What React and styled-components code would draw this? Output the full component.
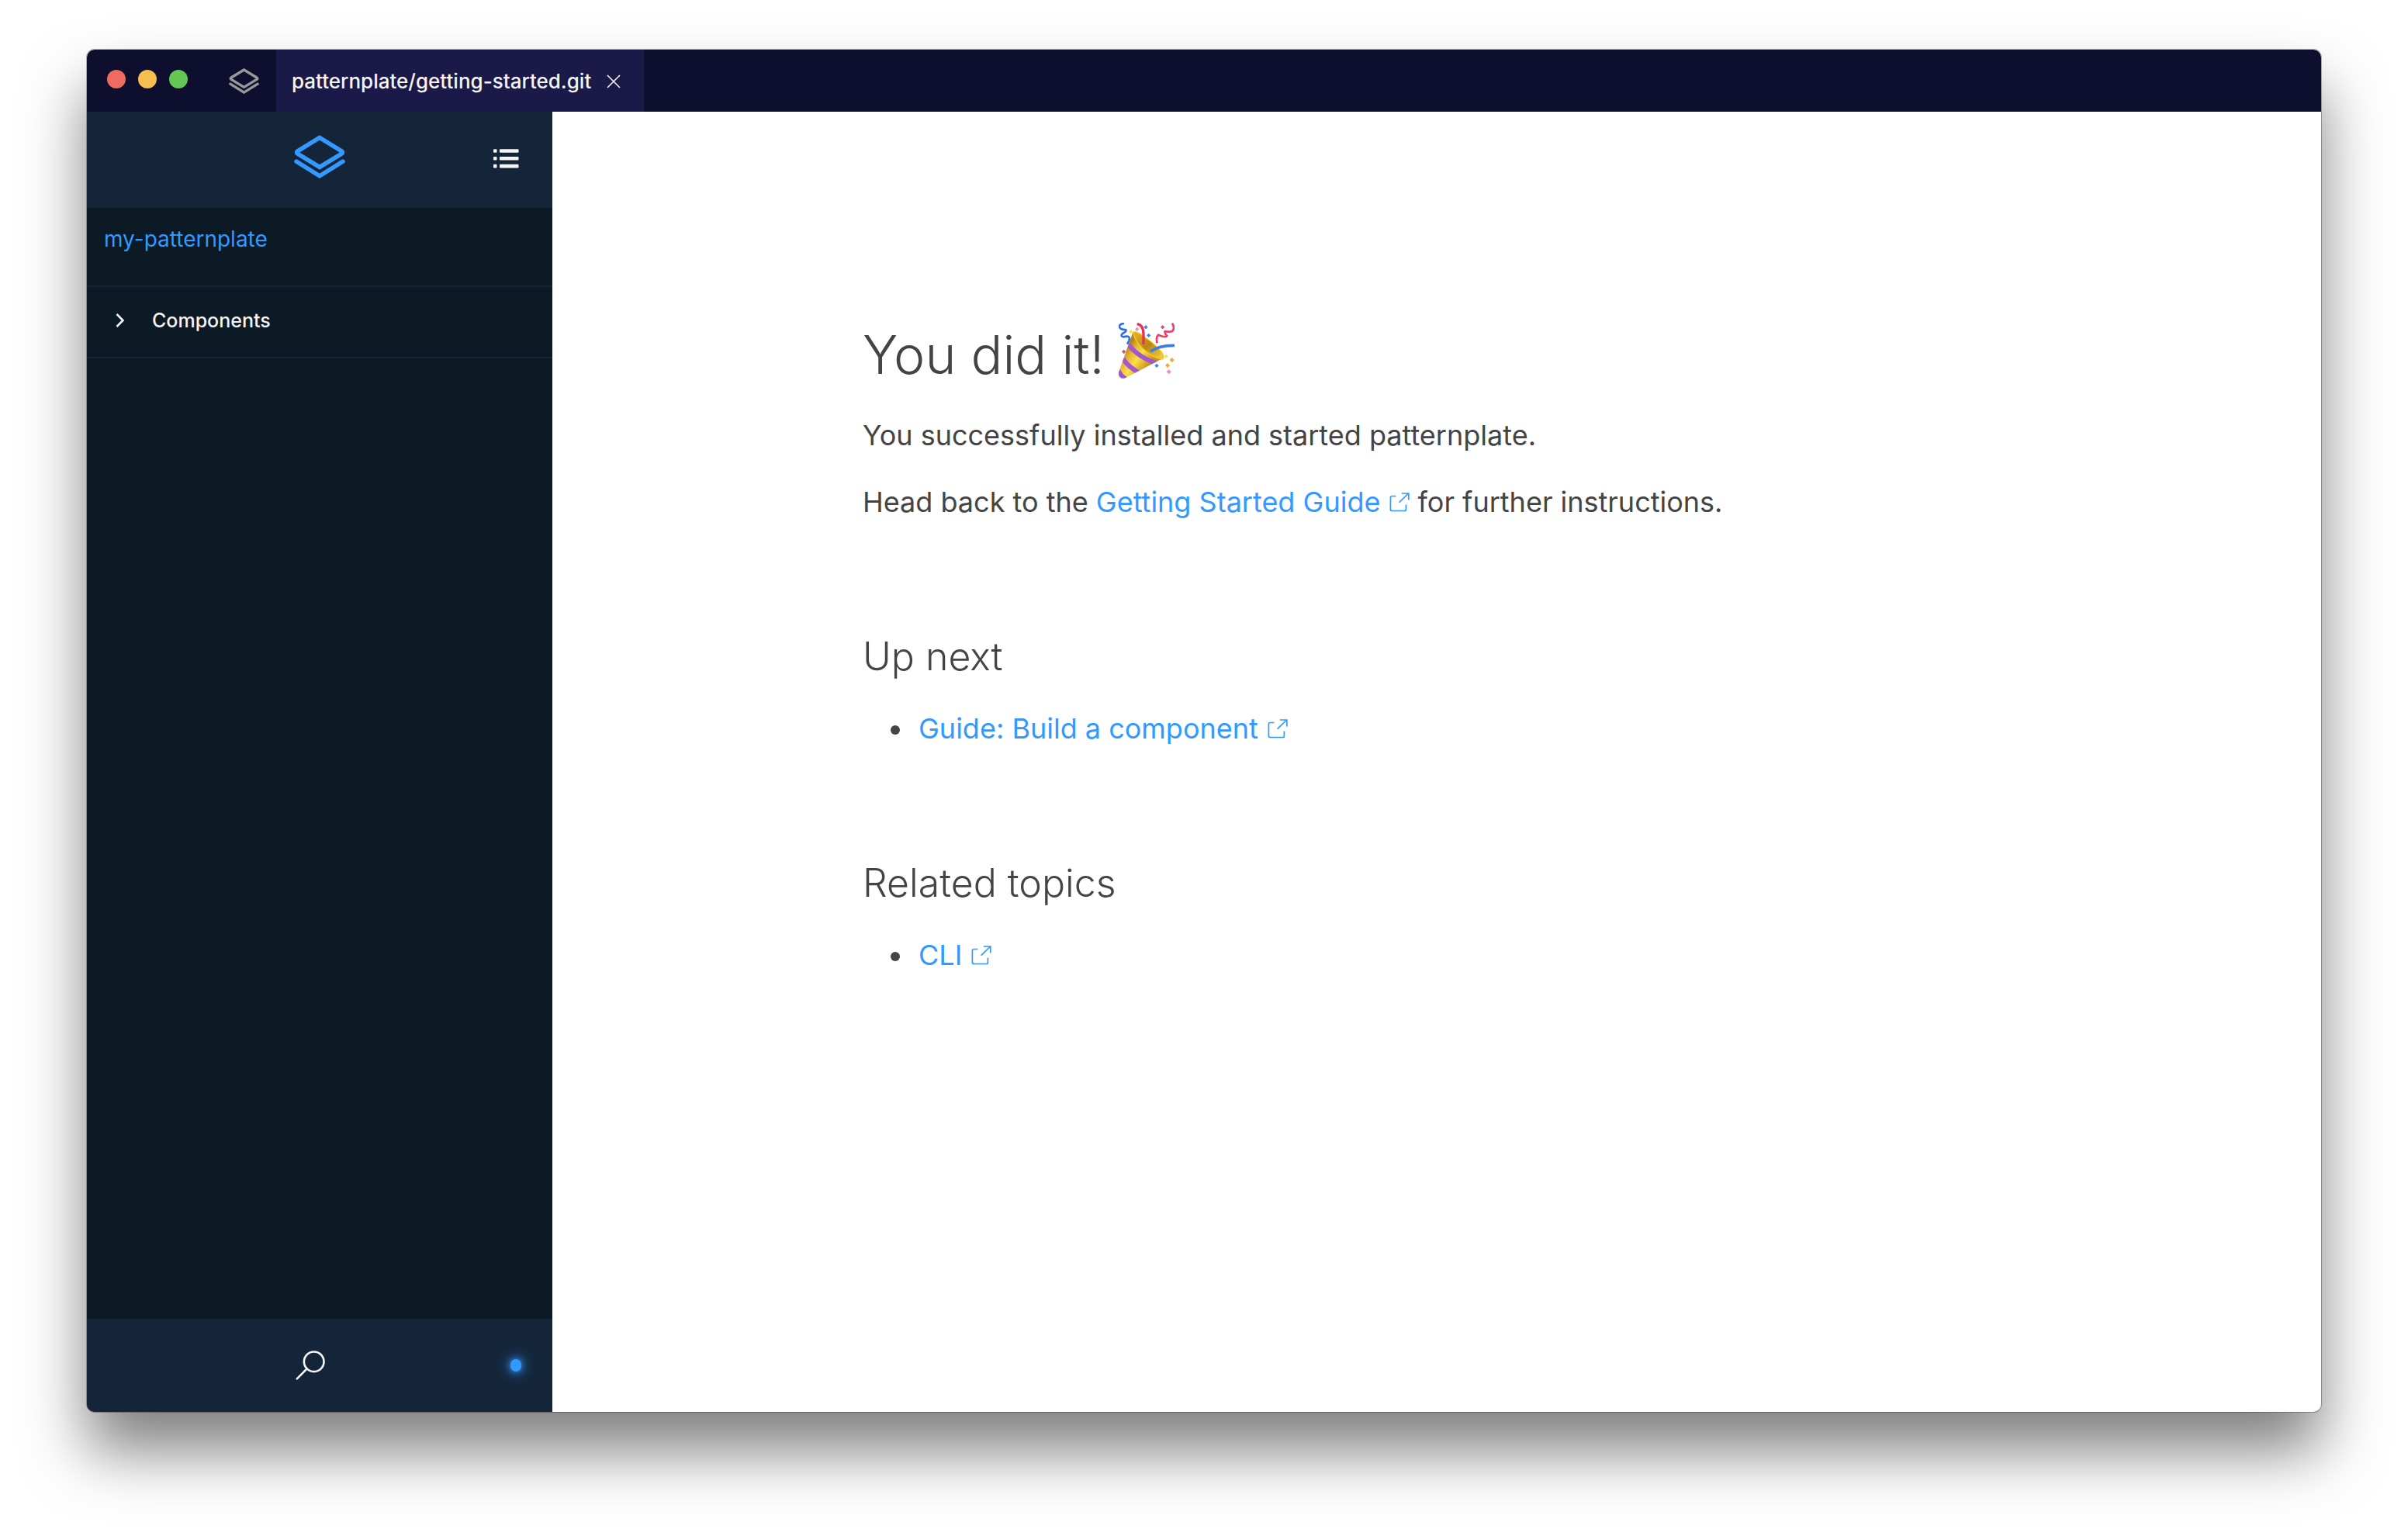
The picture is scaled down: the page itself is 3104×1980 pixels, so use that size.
import React from "react";
import styled, { createGlobalStyle } from "styled-components";

const color = {
  blue: "#3399ff",
  text: "#444444",
  light: "#f5f5f5",
  titleBar: "#0e0e2f",
  tab: "#1b1947",
  panel: "#142539",
  sidebar: "#0c1a26",
};

const GlobalStyle = createGlobalStyle`
  *, *::before, *::after { box-sizing: border-box; }
  body {
    margin: 0;
    background: #ffffff;
    color: ${color.text};
    font-family: Inter, "Liberation Sans", sans-serif;
  }
  svg { display: block; flex: none; }
`;

const Desktop = styled.div`
  display: flex;
  min-height: 100vh;
  padding: 64px 112px 160px;
`;

const Window = styled.div`
  flex: 1;
  display: flex;
  flex-direction: column;
  overflow: hidden;
  border-radius: 10px;
  background: #ffffff;
  box-shadow: 0 0 0 1px rgba(0, 0, 0, 0.28), 0 50px 80px rgba(0, 0, 0, 0.5);
`;

const TitleBar = styled.header`
  display: flex;
  align-items: stretch;
  height: 80px;
  background: ${color.titleBar};
`;

const TrafficLights = styled.div`
  display: flex;
  align-items: center;
  gap: 16px;
  padding: 0 53px 4px 26px;
`;

const Light = styled.button`
  width: 24px;
  height: 24px;
  padding: 0;
  border: 0;
  border-radius: 50%;
  background: ${(p) => p.$fill};
`;

const IconButton = styled.button`
  display: flex;
  align-items: center;
  justify-content: center;
  padding: 0;
  border: 0;
  background: none;
  color: ${(p) => p.$color || color.light};
`;

const HomeButton = styled(IconButton)`
  margin-right: 22px;
`;

const Tab = styled.div`
  display: flex;
  align-items: center;
  gap: 20px;
  padding: 2px 30px 0 20px;
  background: ${color.tab};
  color: ${color.light};
  font-size: 26px;
  font-weight: 500;
  line-height: 40px;
`;

const Body = styled.div`
  flex: 1;
  display: flex;
`;

const Sidebar = styled.aside`
  display: flex;
  flex-direction: column;
  flex: none;
  width: 600px;
  background: ${color.sidebar};
`;

const SidebarHeader = styled.div`
  display: grid;
  grid-template-columns: 1fr auto 1fr;
  align-items: center;
  height: 124px;
  padding: 0 43px 4px;
  background: ${color.panel};

  > :last-child { justify-self: end; }
`;

const LogoLink = styled.a`
  grid-column: 2;
  padding-bottom: 4px;
  color: ${color.blue};
`;

const ProjectLink = styled.a`
  display: block;
  padding: 20px 22px 40px;
  border-bottom: 2px solid ${color.panel};
  color: ${color.blue};
  font-size: 28px;
  line-height: 40px;
  text-decoration: none;
`;

const TreeItem = styled.button`
  display: flex;
  align-items: center;
  gap: 35px;
  width: 100%;
  padding: 20px 36px 24px;
  border: 0;
  border-bottom: 2px solid ${color.panel};
  background: none;
  color: ${color.light};
  font: 500 25px/46px Inter, "Liberation Sans", sans-serif;
  text-align: left;
`;

const SidebarFooter = styled.div`
  display: flex;
  align-items: center;
  height: 120px;
  margin-top: auto;
  padding: 0 40px 0 30px;
  background: ${color.panel};
`;

const SearchButton = styled(IconButton)`
  flex: 1;
`;

const StatusDot = styled.span`
  width: 14px;
  height: 16px;
  border-radius: 7px;
  background: ${color.blue};
  box-shadow: 0 0 10px ${color.blue}, 0 0 20px ${color.blue};
`;

const Main = styled.main`
  flex: 1;
  padding: 268px 40px 80px;
`;

const Article = styled.article`
  max-width: 1480px;
  margin: 0 auto;
  font-size: 36px;
  line-height: 54px;
`;

const Title = styled.h1`
  display: flex;
  align-items: center;
  gap: 18px;
  margin: 0 0 32px;
  font-size: 68px;
  font-weight: 300;
  line-height: 90px;

  svg { margin-bottom: 10px; }
`;

const Subtitle = styled.h2`
  margin: 138px 0 32px;
  font-size: 50px;
  font-weight: 300;
  line-height: 68px;
`;

const Paragraph = styled.p`
  margin: 0 0 32px;

  &:last-of-type { margin-bottom: 0; }
`;

const List = styled.ul`
  margin: 0;
  padding: 0 0 0 66px;

  li { padding-left: 6px; }
`;

const Link = styled.a`
  color: ${color.blue};
  text-decoration: none;

  svg { display: inline-block; margin-left: 12px; vertical-align: baseline; }
`;

function Layers({ width, height }) {
  return (
    <svg width={width} height={height} viewBox="0 0 64 54" fill="none" stroke="currentColor" strokeWidth="5.4" strokeLinecap="round" aria-hidden="true">
      <path d="M32 3.2 4.5 20Q2.4 21.6 4.5 23.2L32 40 59.5 23.2Q61.6 21.6 59.5 20Z" />
      <path d="M3 33 32 51 61 33" />
    </svg>
  );
}

function Cross() {
  return (
    <svg width="18" height="18" viewBox="0 0 18 18" stroke="currentColor" strokeWidth="1.6" aria-hidden="true">
      <path d="M1 1 17 17M17 1 1 17" />
    </svg>
  );
}

function ListIcon() {
  return (
    <svg width="33" height="25" viewBox="0 0 33 25" fill="currentColor" aria-hidden="true">
      {[0.2, 10, 19.8].map((y) => (
        <React.Fragment key={y}>
          <rect x="0" y={y} width="4.5" height="4.6" rx="1" />
          <rect x="8" y={y} width="24.5" height="4.6" rx="1" />
        </React.Fragment>
      ))}
    </svg>
  );
}

function Chevron() {
  return (
    <svg width="13" height="20" viewBox="0 0 13 20" fill="none" stroke="currentColor" strokeWidth="2.6" aria-hidden="true">
      <path d="M2.5 2 10.5 10 2.5 18" />
    </svg>
  );
}

function Magnifier() {
  return (
    <svg width="38" height="38" viewBox="0 0 38 38" fill="none" stroke="currentColor" strokeWidth="2.6" strokeLinecap="round" aria-hidden="true">
      <circle cx="23.7" cy="14.3" r="12.8" />
      <path d="M14.5 23.5 1.8 36.4" />
    </svg>
  );
}

function External() {
  return (
    <svg width="26" height="25" viewBox="0 0 26 25" fill="none" stroke="currentColor" strokeWidth="1.7" aria-hidden="true">
      <path d="M8.5 4.5H3.4Q1.4 4.5 1.4 6.5V21.5Q1.4 23.5 3.4 23.5H19.4Q21.4 23.5 21.4 21.5V15.5" />
      <path d="M12.6 12.6 24.6 1M15.8 1H24.8V9.5" />
    </svg>
  );
}

function PartyPopper() {
  return (
    <svg width="72" height="72" viewBox="57 51 216 216" role="img" aria-label="Party popper">
      <defs>
        <linearGradient id="cone" x1="80" y1="160" x2="165" y2="225" gradientUnits="userSpaceOnUse">
          <stop offset="0" stopColor="#b8860f" />
          <stop offset="0.2" stopColor="#e2b02c" />
          <stop offset="0.55" stopColor="#fbe04a" />
          <stop offset="1" stopColor="#c8921b" />
        </linearGradient>
        <linearGradient id="mouth" x1="130" y1="90" x2="215" y2="185" gradientUnits="userSpaceOnUse">
          <stop offset="0" stopColor="#e0ae22" />
          <stop offset="0.5" stopColor="#b98514" />
          <stop offset="1" stopColor="#f0c63a" />
        </linearGradient>
        <clipPath id="coneShape">
          <path d="M112 88Q150 160 226 190L84 264Q70 270 62 262 54 254 58 240Z" />
        </clipPath>
      </defs>
      <path d="M78 54Q58 56 60 68 64 78 84 78 90 84 72 93 62 104 76 106 98 100 99 112 99 122 90 134" fill="none" stroke="#2f6fe4" strokeWidth="8" strokeLinejoin="round" />
      <path d="M112 88Q150 160 226 190L84 264Q70 270 62 262 54 254 58 240Z" fill="url(#cone)" />
      <g clipPath="url(#coneShape)" fill="none" stroke="#a257cf" strokeWidth="18">
        <path d="M95 134Q130 186 218 213" />
        <path d="M74 190Q92 222 142 248" />
        <path d="M56 236Q64 256 84 268" />
      </g>
      <path d="M113 88Q124 80 160 108 204 138 224 166 238 190 224 192 192 188 152 152 118 120 113 88Z" fill="url(#mouth)" stroke="#f3c934" strokeWidth="4" />
      <path d="M128 56Q152 58 153 94V134" fill="none" stroke="#e5305a" strokeWidth="10" />
      <path d="M180 162Q214 138 273 139" fill="none" stroke="#3c7fe0" strokeWidth="11" />
      <path d="M264 53Q276 74 264 84 252 88 236 84 234 92 244 102 238 110 210 98 200 108 206 130" fill="none" stroke="#ea3d67" strokeWidth="8" strokeLinejoin="round" />
      <path d="M162 60 170 68 162 76 154 68ZM173 92 181 100 173 108 165 100ZM204 209 212 217 204 225 196 217Z" fill="#3b86ea" />
      <path d="M128 68 136 76 128 84 120 76ZM251 232 260 241 251 250 242 241Z" fill="#f58abf" />
      <path d="M227 60 235 68 227 76 219 68ZM77 155 85 163 77 171 69 163Z" fill="#e8446a" />
      <path d="M104 78 112 86 104 94 96 86ZM240 173 248 181 240 189 232 181Z" fill="#f8e548" />
      <path d="M263 186 272 195 263 204 254 195ZM246 207 255 216 246 225 237 216Z" fill="#f7a23b" />
    </svg>
  );
}

function ExternalLink({ children }) {
  return (
    <Link href="#">
      {children}
      <External />
    </Link>
  );
}

export default function App() {
  return (
    <>
      <GlobalStyle />
      <Desktop>
        <Window>
          <TitleBar>
            <TrafficLights>
              <Light $fill="#ee6b60" aria-label="Close window" />
              <Light $fill="#f6be4f" aria-label="Minimize window" />
              <Light $fill="#62c755" aria-label="Zoom window" />
            </TrafficLights>
            <HomeButton $color="#999999" aria-label="Home">
              <Layers width={39} height={33} />
            </HomeButton>
            <Tab>
              patternplate/getting-started.git
              <IconButton aria-label="Close tab">
                <Cross />
              </IconButton>
            </Tab>
          </TitleBar>
          <Body>
            <Sidebar>
              <SidebarHeader>
                <LogoLink href="#" aria-label="patternplate">
                  <Layers width={66} height={56} />
                </LogoLink>
                <IconButton aria-label="Toggle navigation">
                  <ListIcon />
                </IconButton>
              </SidebarHeader>
              <nav>
                <ProjectLink href="#">my-patternplate</ProjectLink>
                <TreeItem aria-expanded="false">
                  <Chevron />
                  Components
                </TreeItem>
              </nav>
              <SidebarFooter>
                <SearchButton aria-label="Search">
                  <Magnifier />
                </SearchButton>
                <StatusDot role="status" aria-label="Connected" />
              </SidebarFooter>
            </Sidebar>
            <Main>
              <Article>
                <Title>
                  You did it!
                  <PartyPopper />
                </Title>
                <Paragraph>You successfully installed and started patternplate.</Paragraph>
                <Paragraph>
                  Head back to the <ExternalLink>Getting Started Guide</ExternalLink> for further instructions.
                </Paragraph>
                <Subtitle>Up next</Subtitle>
                <List>
                  <li>
                    <ExternalLink>Guide: Build a component</ExternalLink>
                  </li>
                </List>
                <Subtitle>Related topics</Subtitle>
                <List>
                  <li>
                    <ExternalLink>CLI</ExternalLink>
                  </li>
                </List>
              </Article>
            </Main>
          </Body>
        </Window>
      </Desktop>
    </>
  );
}
